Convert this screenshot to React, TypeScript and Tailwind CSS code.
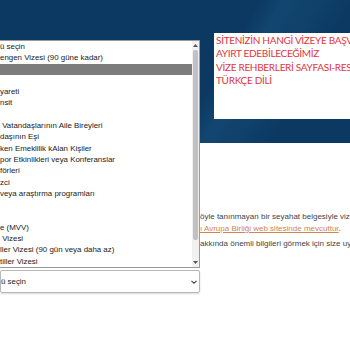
const options = [
  'ü seçin',
  'engen Vizesi (90 güne kadar)',
  '',
  '',
  'yareti',
  'nsit',
  '',
  ' Vatandaşlarının Aile Bireyleri',
  'daşının Eşi',
  'ken Emeklilik kAlan Kişiler',
  'por Etkinlikleri veya Konferanslar',
  'förleri',
  'zci',
  'veya araştırma programları',
  '',
  '',
  'e (MVV)',
  ' Vizesi',
  'ller Vizesi (90 gün veya daha az)',
  'tiller Vizesi',
]

const notice = ['SİTENİZİN HANGİ VİZEYE BAŞVURDUĞUNU', 'AYIRT EDEBİLECEĞİMİZ', 'VİZE REHBERLERİ SAYFASI-RESMİ', 'TÜRKÇE DİLİ']

function Chevron() {
  return (
    <svg width="6" height="4" viewBox="0 0 6 4">
      <path d="M0.5 0.8 L3 3.2 L5.5 0.8" stroke="#444" strokeWidth="1.1" fill="none" />
    </svg>
  )
}

export default function App() {
  return (
    <div className="relative w-[350px] h-[350px] overflow-hidden bg-white font-['Liberation_Sans',Arial,sans-serif]">
      <div className="h-[143px] bg-[#0b3962] bg-[linear-gradient(120deg,#0b3962_0%,#0b3962_60%,#124670_66%,#0f4169_74%,#0b3962_82%,#0b3962_100%)] flex justify-end pt-[33px]">
        <div className="w-[136px] h-[86px] bg-white pl-[2px] pt-[1px] overflow-hidden">
          {notice.map((line, i) => (
            <div key={i} className="h-[13.4px] leading-[13.4px] text-[10px] tracking-[-0.3px] text-[#e2343c] whitespace-nowrap font-['Lato',sans-serif]">{line}</div>
          ))}
        </div>
      </div>

      <div className="pt-[68px] pl-[200px] text-[8px] text-[#444] whitespace-nowrap">
        <p className="leading-[12px]">öyle tanınmayan bir seyahat belgesiyle vize</p>
        <p className="leading-[12px]">
          <span className="text-[#cf8455] underline">ı Avrupa Birliği web sitesinde mevcuttur</span>.
        </p>
        <p className="leading-[12px] mt-[3px]">akkında önemli bilgileri görmek için size uygun</p>
      </div>

      <div className="mt-[20px] w-[200px] h-[23px] border border-[#b8b8b8] rounded-[2px] shadow-[0_1px_2px_rgba(0,0,0,0.15)] flex items-center justify-between pr-[2px] text-[7.9px] text-[#222]">
        <span>ü seçin</span>
        <Chevron />
      </div>

      <div className="absolute top-[40px] left-0 w-[200px] h-[228px] bg-white border-t border-b border-r border-[#9a9a9a] flex text-[7.9px] text-[#1a1a1a]">
        <div className="flex-1">
          {options.map((o, i) => (
            <div key={i} className={`h-[11.3px] leading-[11.3px] whitespace-pre ${i === 2 ? 'bg-[#7c7c7c]' : ''}`}>{o}</div>
          ))}
        </div>
        <div className="w-[7px] bg-[#f1f1f1] flex flex-col items-center">
          <div className="h-[9px] flex items-center justify-center">
            <svg width="5" height="3" viewBox="0 0 5 3"><path d="M0 3 L2.5 0 L5 3 Z" fill="#555" /></svg>
          </div>
          <div className="w-[5px] h-[190px] rounded-[2px] bg-[#c1c1c1]" />
          <div className="flex-1" />
          <div className="h-[9px] flex items-center justify-center">
            <svg width="5" height="3" viewBox="0 0 5 3"><path d="M0 0 L2.5 3 L5 0 Z" fill="#555" /></svg>
          </div>
        </div>
      </div>
    </div>
  )
}
